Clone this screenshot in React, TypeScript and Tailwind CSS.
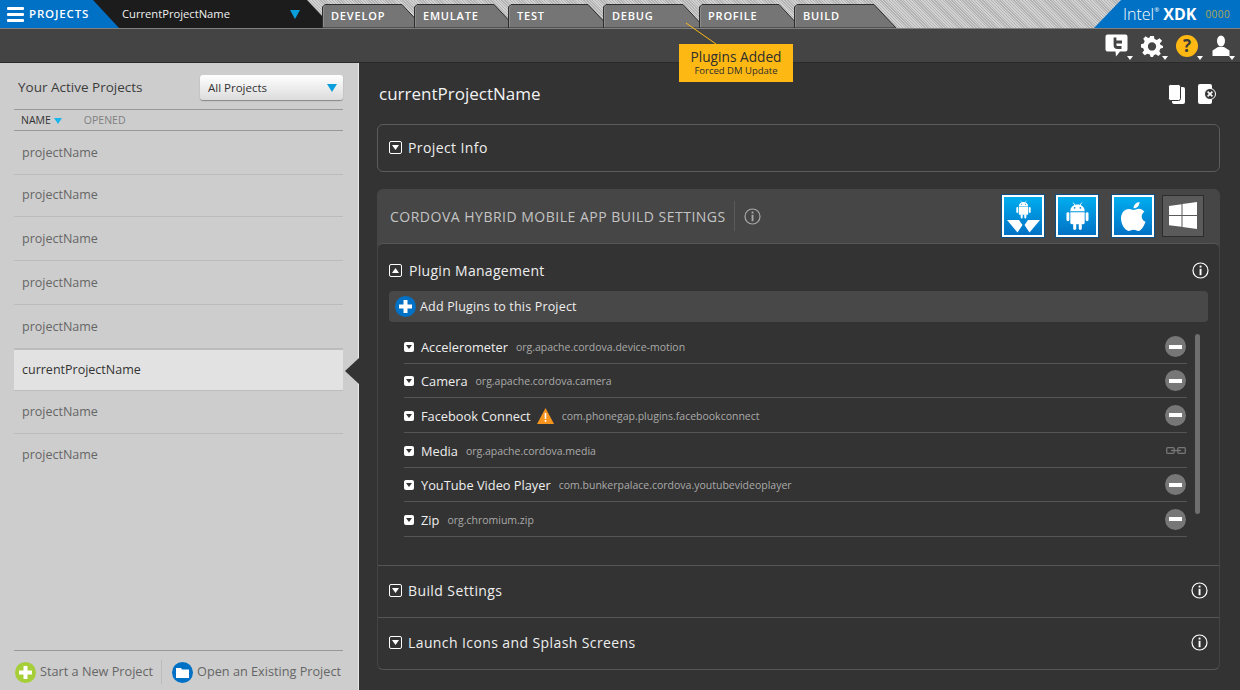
const tabs = [
  { name: "DEVELOP", cls: "mr-[-11px]" },
  { name: "EMULATE", cls: "mr-[-9px]" },
  { name: "TEST", cls: "mr-[-8px]" },
  { name: "DEBUG", cls: "mr-[-7px]" },
  { name: "PROFILE", cls: "mr-[-8px]" },
  { name: "BUILD", cls: "" },
]

const projects = [
  { name: "projectName", cls: "h-[44px] pt-[2px]" },
  { name: "projectName", cls: "h-[42px]" },
  { name: "projectName", cls: "h-[44px] pt-[2px]" },
  { name: "projectName", cls: "h-[44px] pt-[2px]" },
  { name: "projectName", cls: "h-[44px] pt-[2px]" },
  { name: "currentProjectName", cls: "h-[42px]", current: true },
  { name: "projectName", cls: "h-[43px]" },
  { name: "projectName", cls: "h-[42px] pt-[1px]" },
]

const plugins = [
  { name: "Accelerometer", id: "org.apache.cordova.device-motion", cls: "h-[34px]" },
  { name: "Camera", id: "org.apache.cordova.camera", cls: "h-[34px]" },
  { name: "Facebook Connect", id: "com.phonegap.plugins.facebookconnect", cls: "h-[35px]", warn: true },
  { name: "Media", id: "org.apache.cordova.media", cls: "h-[35px]", linked: true },
  { name: "YouTube Video Player", id: "com.bunkerpalace.cordova.youtubevideoplayer", cls: "h-[34px]" },
  { name: "Zip", id: "org.chromium.zip", cls: "h-[35px]" },
]

function Tab({ name, cls }: { name: string; cls: string }) {
  return (
    <div className={`relative h-[24px] w-[103px] shrink-0 ${cls}`}>
      <svg className="absolute inset-0" width="103" height="24" viewBox="0 0 103 24">
        <path d="M0.5 24 V3 L3 0.5 H80 L102 24 Z" fill="#757575" stroke="#2e2e2e" />
        <path d="M1.5 23 V3.5 L3.5 1.5" fill="none" stroke="#8c8c8c" />
      </svg>
      <span className="absolute left-[9px] top-[4px] text-[11px] leading-[15px] font-semibold tracking-[0.8px] text-white">{name}</span>
    </div>
  )
}

function Caret() {
  return <span className="absolute bottom-[-3px] right-[-5px] h-0 w-0 border-x-[3px] border-t-[4px] border-x-transparent border-t-white" />
}

function InfoIcon({ color = "#ffffff" }: { color?: string }) {
  return (
    <svg width="17" height="17" viewBox="0 0 17 17" fill="none">
      <circle cx="8.5" cy="8.5" r="7.5" stroke={color} strokeWidth="1.2" />
      <rect x="7.6" y="3.6" width="1.9" height="1.9" fill={color} />
      <rect x="7.6" y="6.8" width="1.9" height="6.4" fill={color} />
    </svg>
  )
}

function ToggleBox({ up }: { up?: boolean }) {
  return (
    <span className="flex h-[13px] w-[13px] shrink-0 items-center justify-center rounded-[2px] border border-white">
      <svg width="7" height="5" viewBox="0 0 7 5">
        <path d={up ? "M3.5 0 L7 5 H0 Z" : "M0 0 H7 L3.5 5 Z"} fill="#ffffff" />
      </svg>
    </span>
  )
}

function AndroidIcon({ w, h }: { w: number; h: number }) {
  return (
    <svg width={w} height={h} viewBox="0 0 24 29" fill="#fff">
      <path d="M7.5 0.5 L9.5 3.5 M16.5 0.5 L14.5 3.5" stroke="#fff" strokeWidth="0.9" fill="none" />
      <path d="M4.5 9.5 C4.5 5 8 2.5 12 2.5 C16 2.5 19.5 5 19.5 9.5 Z" />
      <circle cx="9" cy="6" r="0.9" fill="#0a8ad6" />
      <circle cx="15" cy="6" r="0.9" fill="#0a8ad6" />
      <path d="M4.5 10.5 H19.5 V21.5 Q19.5 23 18 23 H6 Q4.5 23 4.5 21.5 Z" />
      <rect x="0.5" y="10.5" width="3" height="9.5" rx="1.5" />
      <rect x="20.5" y="10.5" width="3" height="9.5" rx="1.5" />
      <rect x="7.5" y="22" width="3.2" height="7" rx="1.6" />
      <rect x="13.3" y="22" width="3.2" height="7" rx="1.6" />
    </svg>
  )
}

function AppleIcon() {
  return (
    <svg width="25" height="29" viewBox="0 0 25 29" fill="#fff">
      <path d="M18.5 0 C18.7 3.5 15.8 6.6 12.6 6.3 C12.3 3.1 15.3 0.2 18.5 0 Z" />
      <path d="M12.7 8 C14 8 15.7 6.7 18 6.7 C19.8 6.7 22 7.7 23.4 9.7 C19.4 12.2 20 18 24.5 19.8 C23.2 23.4 20.4 29 17.4 29 C15.5 29 14.8 27.8 12.6 27.8 C10.3 27.8 9.5 29 7.7 29 C4.4 29 0 22.5 0 16.6 C0 10.7 3.8 7 7.6 7 C9.8 7 11.5 8 12.7 8 Z" />
    </svg>
  )
}

function WindowsIcon() {
  return (
    <svg width="28" height="28" viewBox="0 0 28 28" fill="#fff">
      <path d="M0 4 L12.5 2.3 V13 H0 Z" />
      <path d="M13.5 2.1 L28 0 V13 H13.5 Z" />
      <path d="M0 14 H12.5 V24.8 L0 23.2 Z" />
      <path d="M13.5 14 H28 V27 L13.5 25 Z" />
    </svg>
  )
}

function Section({ title }: { title: string }) {
  return (
    <div className="flex h-[52px] items-center justify-between border-t border-[#555] pb-[2px] pl-[11px] pr-[11px]">
      <div className="flex items-center gap-[6px]">
        <ToggleBox />
        <span className="text-[14px] tracking-[0.4px] text-[#eee]">{title}</span>
      </div>
      <InfoIcon />
    </div>
  )
}

function PlatformButton({ children, off }: { children: React.ReactNode; off?: boolean }) {
  return (
    <div
      className={
        off
          ? "flex h-[42px] w-[42px] items-center justify-center border border-[#2c2c2c] bg-[#5a5a5a]"
          : "flex h-[42px] w-[42px] items-center justify-center border-2 border-white bg-gradient-to-b from-[#00aeef] to-[#0071c5] outline outline-1 outline-[#0a4f86]"
      }
    >
      {children}
    </div>
  )
}

export default function App() {
  return (
    <div className="relative flex h-[690px] w-[1240px] flex-col overflow-hidden bg-[#333] font-['Open_Sans',sans-serif]">
      {/* top bar with the tabs */}
      <div className="flex h-[29px] shrink-0 items-end border-b border-[#808080] bg-[repeating-linear-gradient(45deg,#b4b4b4_0px,#b4b4b4_1px,#d2d2d2_1px,#d2d2d2_2px)]">
        <div className="flex h-[28px] w-[322px] shrink-0 items-center bg-[#1c1c1c] [clip-path:polygon(0_0,307px_0,322px_16px,322px_100%,0_100%)]">
          <div className="flex h-full w-[120px] items-center gap-[5px] bg-[#0071c5] pl-[7px] [clip-path:polygon(0_0,93px_0,119px_100%,0_100%)]">
            <div className="flex w-[17px] flex-col gap-[3px]">
              <span className="h-[3px] rounded-[1px] bg-white" />
              <span className="h-[3px] rounded-[1px] bg-white" />
              <span className="h-[3px] rounded-[1px] bg-white" />
            </div>
            <span className="text-[11.5px] font-semibold tracking-[0.85px] text-white">PROJECTS</span>
          </div>
          <span className="ml-[2px] text-[11.2px] text-[#f0f0f0]">CurrentProjectName</span>
          <span className="ml-[60px] h-0 w-0 border-x-[5px] border-t-[9px] border-x-transparent border-t-[#0a9fdc]" />
        </div>
        <div className="flex items-end">
          {tabs.map((t) => (
            <Tab key={t.name} name={t.name} cls={t.cls} />
          ))}
        </div>
        <div className="ml-auto flex h-[28px] w-[146px] shrink-0 items-center bg-[#0071c5] pl-[29px] [clip-path:polygon(27px_0,100%_0,100%_100%,0_100%)]">
          <span className="text-[16px] font-light text-white">Intel</span>
          <span className="mb-[8px] text-[6px] text-white">®</span>
          <span className="ml-[4px] text-[16px] font-bold text-white">XDK</span>
          <span className="ml-[9px] text-[10px] tracking-[0.5px] text-[#b3a94f]">0000</span>
        </div>
      </div>

      {/* tool bar */}
      <div className="flex h-[34px] shrink-0 items-center justify-end gap-[13px] border-b border-[#2a2a2a] bg-[#444] pr-[10px]">
        <div className="relative">
          <svg width="23" height="23" viewBox="0 0 23 23">
            <path d="M2.5 0.5 H20.5 Q22.5 0.5 22.5 2.5 V15.5 Q22.5 17.5 20.5 17.5 H15 L11 22.5 L10.5 17.5 H2.5 Q0.5 17.5 0.5 15.5 V2.5 Q0.5 0.5 2.5 0.5 Z" fill="#fff" />
            <path d="M10 3.5 V11 Q10 13.5 12.5 13.5 H16.5 M10 8 H17" fill="none" stroke="#444" strokeWidth="2.8" />
          </svg>
          <Caret />
        </div>
        <div className="relative">
          <svg width="22" height="22" viewBox="0 0 24 24" fill="#fff">
            <path fillRule="evenodd" d="M10 1 H14 L14.7 4.4 L17.3 5.5 L20.2 3.6 L23 6.4 L20.5 9.3 L21.5 11 L24 12 V14 L21 15 L20 17.6 L21.6 20.5 L19 23 L16 21 L14 22 L13 24 H10.5 L9.6 21.4 L7 20.4 L4 22 L1.4 19.4 L3.4 16.6 L2.4 14.4 L0 13.5 V10 L3 9.2 L4 6.6 L2.4 4 L5 1.4 L7.8 3.2 L9.6 2.4 Z M12 8 A4.5 4.5 0 1 0 12 17 A4.5 4.5 0 1 0 12 8 Z" />
          </svg>
          <Caret />
        </div>
        <div className="relative">
          <span className="flex h-[22px] w-[22px] items-center justify-center rounded-full bg-[#fdb813] text-[17px] font-bold leading-none text-[#3a3a3a]">?</span>
          <Caret />
        </div>
        <div className="relative ml-[1px]">
          <svg width="18" height="22" viewBox="0 0 18 22">
            <ellipse cx="9" cy="6" rx="4" ry="5.5" fill="#fff" />
            <path d="M6 12 H12 L17.5 15.5 V21 H0.5 V15.5 Z" fill="#fff" />
          </svg>
          <Caret />
        </div>
      </div>

      <div className="flex min-h-0 flex-1">
        {/* projects column */}
        <div className="relative flex w-[359px] shrink-0 flex-col border-r border-[#e8e8e8] bg-[#cdcdcd] pl-[14px] pr-[15px]">
          <div className="flex h-[46px] shrink-0 items-end justify-between pb-[9px]">
            <span className="mb-[3px] ml-[4px] text-[13.5px] leading-[20px] text-[#3c3c3c]">Your Active Projects</span>
            <div className="flex h-[25px] w-[143px] items-center justify-between rounded-[3px] bg-gradient-to-b from-white to-[#dcdcdc] pl-[8px] pr-[6px] shadow-[0_1px_1px_#888]">
              <span className="mt-[1px] text-[11.5px] text-[#333]">All Projects</span>
              <span className="h-0 w-0 border-x-[5px] border-t-[8px] border-x-transparent border-t-[#0a9fdc]" />
            </div>
          </div>
          <div className="flex h-[22px] shrink-0 items-center border-y border-[#999] pl-[7px] pt-[1px] text-[10.5px]">
            <span className="text-[#333]">NAME</span>
            <span className="ml-[3px] h-0 w-0 border-x-[4px] border-t-[6px] border-x-transparent border-t-[#1ab5ea]" />
            <span className="ml-[22px] text-[#808080]">OPENED</span>
          </div>
          <div className="flex flex-col">
            {projects.map((p, i) =>
              p.current ? (
                <div key={i} className={`flex items-center border-y border-[#bdbdbd] bg-[#e2e2e2] pl-[8px] text-[12.5px] text-[#333] ${p.cls}`}>
                  {p.name}
                </div>
              ) : (
                <div key={i} className={`flex items-center border-b border-[#bbb] pl-[8px] text-[12.5px] text-[#666] last:border-b-0 ${p.cls}`}>
                  {p.name}
                </div>
              ),
            )}
          </div>
          <div className="mt-auto flex h-[40px] shrink-0 items-center whitespace-nowrap border-t border-[#999] pt-[3px]">
            <span className="ml-[1px] flex h-[21px] w-[21px] shrink-0 items-center justify-center rounded-full bg-[#a6ce39]">
              <svg width="13" height="13" viewBox="0 0 13 13">
                <path d="M4.5 0 H8.5 V4.5 H13 V8.5 H8.5 V13 H4.5 V8.5 H0 V4.5 H4.5 Z" fill="#fff" />
              </svg>
            </span>
            <span className="ml-[4px] text-[12.7px] text-[#666]">Start a New Project</span>
            <span className="ml-[8px] h-[24px] w-px shrink-0 bg-[#bbb]" />
            <span className="ml-[10px] flex h-[21px] w-[21px] shrink-0 items-center justify-center rounded-full bg-[#0071c5]">
              <svg width="13" height="11" viewBox="0 0 13 11">
                <path d="M0 1 H5 L6 2.5 H13 V11 H0 Z" fill="#fff" />
              </svg>
            </span>
            <span className="ml-[4px] text-[12.7px] text-[#666]">Open an Existing Project</span>
          </div>
          {/* pointer to the open project */}
          <span className="absolute right-[-1px] top-[295px] h-0 w-0 border-y-[13px] border-r-[14px] border-y-transparent border-r-[#333]" />
        </div>

        {/* project details */}
        <div className="flex min-w-0 flex-1 flex-col pl-[18px] pr-[20px]">
          <div className="flex h-[61px] shrink-0 items-center justify-between pl-[2px] pr-[4px]">
            <span className="text-[17px] text-[#f2f2f2]">currentProjectName</span>
            <div className="flex items-center gap-[13px]">
              <svg width="17" height="20" viewBox="0 0 17 20">
                <rect x="4" y="3" width="13" height="17" rx="2" fill="#fff" />
                <rect x="0.5" y="0.5" width="12" height="16" rx="2" fill="#fff" stroke="#333" />
              </svg>
              <svg width="18" height="20" viewBox="0 0 18 20">
                <rect x="0" y="0" width="14" height="20" rx="2" fill="#fff" />
                <circle cx="12" cy="10" r="5.5" fill="#333" stroke="#fff" />
                <path d="M9.6 7.6 L14.4 12.4 M14.4 7.6 L9.6 12.4" stroke="#fff" strokeWidth="1.6" />
              </svg>
            </div>
          </div>

          <div className="flex h-[48px] shrink-0 items-center gap-[6px] rounded-[6px] border border-[#5c5c5c] pb-[2px] pl-[11px]">
            <ToggleBox />
            <span className="text-[14px] tracking-[0.4px] text-[#eee]">Project Info</span>
          </div>

          <div className="mt-[17px] flex h-[481px] shrink-0 flex-col rounded-[6px] bg-[#464646]">
            <div className="flex h-[54px] shrink-0 items-center pl-[13px] pr-[16px]">
              <span className="text-[14px] tracking-[0.5px] text-[#c4c4c4]">CORDOVA HYBRID MOBILE APP BUILD SETTINGS</span>
              <span className="ml-[8px] h-[30px] w-px bg-[#5a5a5a]" />
              <span className="ml-[9px]">
                <InfoIcon color="#a8a8a8" />
              </span>
              <div className="ml-auto flex items-center">
                <PlatformButton>
                  <div className="flex flex-col items-center gap-[1px]">
                    <AndroidIcon w={15} h={19} />
                    <svg width="33" height="13" viewBox="0 0 33 13">
                      <path d="M0 0 H12 L15.5 5 L10.5 12.5 Z M33 0 H21 L17.5 5 L22.5 12.5 Z" fill="#fff" />
                    </svg>
                  </div>
                </PlatformButton>
                <div className="ml-[12px]">
                  <PlatformButton>
                    <AndroidIcon w={23} h={28} />
                  </PlatformButton>
                </div>
                <div className="ml-[14px]">
                  <PlatformButton>
                    <AppleIcon />
                  </PlatformButton>
                </div>
                <div className="ml-[8px]">
                  <PlatformButton off>
                    <WindowsIcon />
                  </PlatformButton>
                </div>
              </div>
            </div>

            <div className="flex min-h-0 flex-1 flex-col rounded-[6px] border-x border-b border-t border-x-[#444] border-b-[#555] border-t-[#555] bg-[#333]">
              <div className="flex h-[47px] shrink-0 items-center justify-between pl-[11px] pr-[10px] pt-[6px]">
                <div className="flex items-center gap-[7px]">
                  <ToggleBox up />
                  <span className="text-[14px] tracking-[0.3px] text-[#eee]">Plugin Management</span>
                </div>
                <InfoIcon />
              </div>
              <div className="mx-[11px] flex h-[31px] shrink-0 items-center gap-[4px] rounded-[4px] bg-[#484848] pl-[6px]">
                <span className="flex h-[21px] w-[21px] items-center justify-center rounded-full bg-[#0071c5]">
                  <svg width="13" height="13" viewBox="0 0 13 13">
                    <path d="M4.5 0 H8.5 V4.5 H13 V8.5 H8.5 V13 H4.5 V8.5 H0 V4.5 H4.5 Z" fill="#fff" />
                  </svg>
                </span>
                <span className="mt-[1px] text-[12.5px] tracking-[0.17px] text-[#eee]">Add Plugins to this Project</span>
              </div>

              <div className="mt-[8px] flex pl-[26px] pr-[19px]">
                <div className="flex-1">
                  {plugins.map((p) => (
                    <div key={p.name} className={`flex items-center border-b border-[#555] pt-[3px] ${p.cls}`}>
                      <span className="mb-[2px] flex h-[10px] w-[10px] items-center justify-center rounded-[2px] bg-white">
                        <svg width="6" height="4" viewBox="0 0 6 4">
                          <path d="M0 0 H6 L3 4 Z" fill="#333" />
                        </svg>
                      </span>
                      <span className="ml-[7px] text-[12.8px] text-[#eee]">{p.name}</span>
                      {p.warn && (
                        <svg className="ml-[6px] mb-[2px]" width="17" height="16" viewBox="0 0 17 16">
                          <path d="M8.5 0 L17 16 H0 Z" fill="#f7941d" />
                          <rect x="7.7" y="5" width="1.6" height="6" fill="#fff" />
                          <rect x="7.7" y="12" width="1.6" height="1.8" fill="#fff" />
                        </svg>
                      )}
                      <span className="ml-[8px] text-[10.5px] text-[#aaa]">{p.id}</span>
                      <span className="mb-[3px] ml-auto mr-[1px] flex w-[21px] justify-center">
                        {p.linked ? (
                          <svg width="20" height="7" viewBox="0 0 20 7" fill="none" stroke="#777" strokeWidth="1.3">
                            <rect x="0.7" y="0.7" width="7.5" height="5.6" rx="1" />
                            <rect x="11.8" y="0.7" width="7.5" height="5.6" rx="1" />
                            <path d="M5 3.5 H15" />
                          </svg>
                        ) : (
                          <span className="flex h-[21px] w-[21px] items-center justify-center rounded-full bg-[#777]">
                            <span className="h-[4px] w-[13px] bg-white" />
                          </span>
                        )}
                      </span>
                    </div>
                  ))}
                </div>
                <div className="ml-[8px] mt-[4px] h-[180px] w-[5px] rounded-[3px] bg-[#6e6e6e]" />
              </div>

              <div className="mt-auto">
                <Section title="Build Settings" />
                <Section title="Launch Icons and Splash Screens" />
              </div>
            </div>
          </div>
        </div>
      </div>

      {/* notification tip over the tabs */}
      <svg className="absolute left-[684px] top-[22px]" width="34" height="24" viewBox="0 0 34 24">
        <path d="M2 1 L32 22" stroke="#fdb813" strokeWidth="1" fill="none" />
      </svg>
      <div className="absolute left-[679px] top-[44px] flex h-[38px] w-[114px] flex-col items-center justify-center bg-[#fdb813] text-[#2e2e2e]">
        <span className="text-[13.7px] leading-[16px]">Plugins Added</span>
        <span className="text-[9.5px] leading-[12px]">Forced DM Update</span>
      </div>
    </div>
  )
}
